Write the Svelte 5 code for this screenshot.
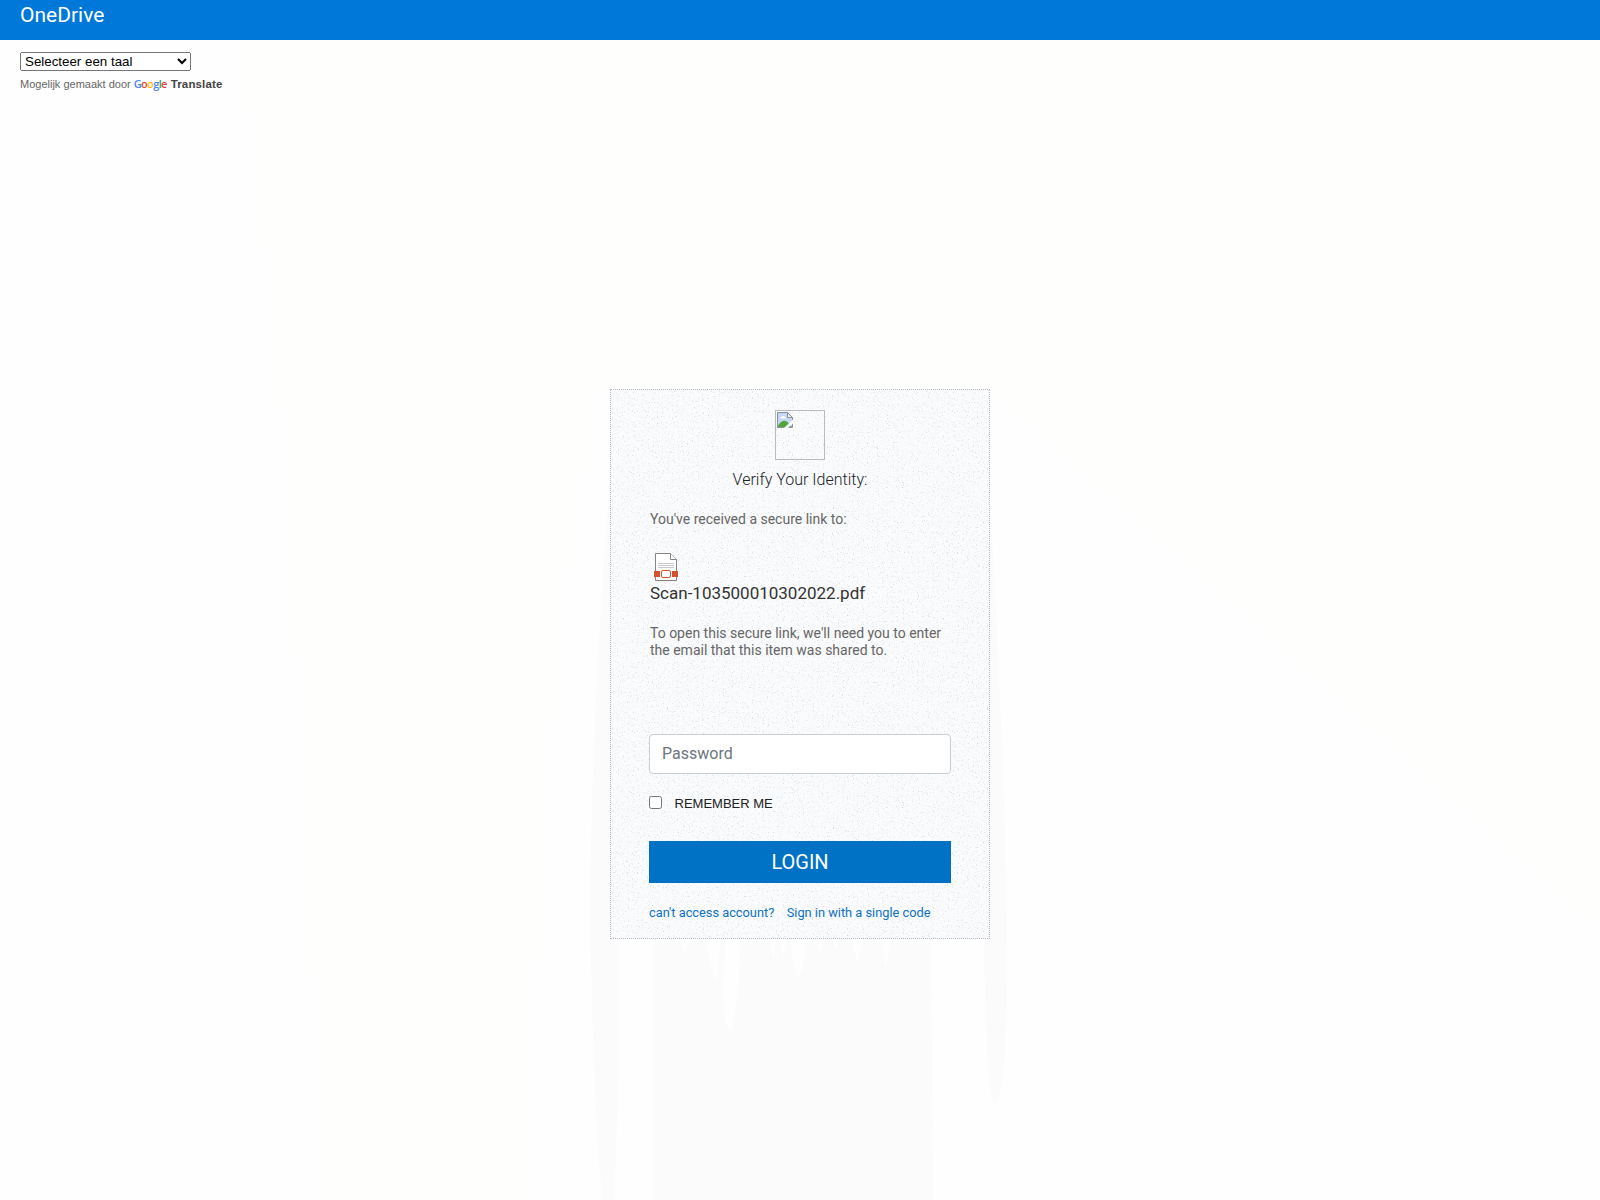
<script lang="ts">
    let password = $state('');
    let remember = $state(false);
    let language = $state('');

    const fileName = 'Scan-103500010302022.pdf';

    const brand = [
        { letter: 'G', tone: 'blue' },
        { letter: 'o', tone: 'red' },
        { letter: 'o', tone: 'yellow' },
        { letter: 'g', tone: 'blue' },
        { letter: 'l', tone: 'green' },
        { letter: 'e', tone: 'red' }
    ];
</script>

<div class="page">
    <svg class="backdrop" width="1600" height="1200" viewBox="0 0 1600 1200" aria-hidden="true">
        <path d="M240 40 Q270 260 290 500 Q310 900 325 1200 H525 Q535 900 560 620 Q580 480 600 389 H990 L1600 930 V40Z" fill="#fefefd" />
        <path d="M610 480 Q585 800 592 1000 Q594 1100 602 1200 H614 Q619 1100 619 938Z" fill="#fbfbfb" />
        <path d="M654 938 H931 L933 1200 H654Z" fill="#fbfbfb" />
        <path d="M984 938 L990 500 Q1012 900 1006 1030 Q1002 1104 995 1105 Q986 1100 984 938Z" fill="#fbfbfb" />
        <path d="M680 938h10l-5 18zM706 938h14q-1 30-4 42q-5-4-10-42zM726 938h15q-4 80-10 94q-8-5-8-50zM768 938h8l-2 21zM779 938h8l-3 20zM791 938h16q-3 35-9 39q-5-4-7-39zM816 938h7l-3 15zM832 938h7l-3 14zM851 938h13l-7 23zM881 938h10l-5 32z" fill="#fefefe" />
    </svg>

    <header class="topbar">OneDrive</header>

    <div class="translate">
        <select bind:value={language}>
            <option value="">Selecteer een taal</option>
        </select>
        <div class="powered">
            Mogelijk gemaakt door
            <span class="google">{#each brand as item}<span class={item.tone}>{item.letter}</span>{/each}</span>
            <b>Translate</b>
        </div>
    </div>

    <main class="card">
        <svg class="grain" width="378" height="548" aria-hidden="true">
            <filter id="speckle" x="0" y="0" width="100%" height="100%">
                <feTurbulence type="fractalNoise" baseFrequency="0.8" numOctaves="2" seed="4" />
                <feColorMatrix values="0 0 0 0 0.5  0 0 0 0 0.54  0 0 0 0 0.56  2.2 0 0 0 -1.3" />
            </filter>
            <rect width="378" height="548" filter="url(#speckle)" />
        </svg>

        <div class="missing">
            <svg width="16" height="16" viewBox="0 0 16 16">
                <path d="M.5.5h10l5 5v10H.5z" fill="#c6d7f5" stroke="#8b9299" />
                <path d="M3 6.500q0-2 2-2q1-1.500 2.500 0q1.500.5 1.500 2z" fill="#fff" />
                <path d="M1 15v-1.500q4.500-7 9.500-3.500l4.500 5z" fill="#55a33d" />
                <path d="M7 16L16 7.500v4L11 16z" fill="#fafbfb" />
                <path d="M10.500.5v5h5z" fill="#eee" stroke="#8b9299" />
            </svg>
        </div>
        <h1>Verify Your Identity:</h1>

        <p class="intro">You've received a secure link to:</p>
        <svg class="file-icon" width="24" height="29" viewBox="0 0 24 29">
            <path d="M1.500.5h15l6 6v21h-21z" fill="#fff" stroke="#858585" />
            <path d="M16.500.5v6h6" fill="#fff" stroke="#858585" />
            <path d="M4 10.500h16M4 12.500h16M4 14.500h16" stroke="#b9bbc2" stroke-width=".8" />
            <path d="M0 18h24v6H0z" fill="#d35230" />
            <rect x="7" y="17" width="10" height="8" rx="1.500" fill="#fff" stroke="#fff" stroke-width="2" />
            <rect x="7.500" y="17.500" width="9" height="7" rx="1.500" fill="#fff" stroke="#d35230" />
        </svg>
        <div class="file-name">{fileName}</div>
        <p class="hint">To open this secure link, we'll need you to enter the email that this item was shared to.</p>

        <input class="password" type="password" placeholder="Password" bind:value={password} />

        <label class="remember">
            <input type="checkbox" bind:checked={remember} />
            <span>REMEMBER ME</span>
        </label>

        <button class="login" type="button">LOGIN</button>

        <nav class="links">
            <a href="#access">can't access account?</a>
            <a href="#code">Sign in with a single code</a>
        </nav>
    </main>
</div>

<style>
    :global(body) {
        margin: 0;
        overflow: hidden;
    }

    .page {
        position: relative;
        box-sizing: border-box;
        height: 1200px;
        background: #fefefe;
        font-family: Roboto, sans-serif;
        color: #212529;
    }

    .backdrop {
        position: absolute;
        inset: 0;
    }

    .topbar {
        position: relative;
        box-sizing: border-box;
        height: 40px;
        padding-left: 20px;
        background: #0078d9;
        color: #fff;
        font-size: 21px;
        line-height: 30px;
    }

    .translate {
        position: relative;
        height: 60px;
        padding: 12px 20px 0;
        font-family: "Liberation Sans", Arial, sans-serif;
    }

    select {
        display: block;
        width: 171px;
        height: 19px;
        font-family: inherit;
        font-size: 13.333px;
        color: #000;
    }

    .powered {
        display: flex;
        align-items: center;
        gap: 3px;
        margin-top: 5px;
        font-size: 11px;
        line-height: 17px;
        color: #666;
        white-space: nowrap;
    }

    .powered b {
        color: #444;
        font-size: 11.500px;
        letter-spacing: 0.15px;
    }

    .google {
        width: 34px;
        padding-bottom: 2px;
        font-family: "Open Sans", sans-serif;
        font-size: 11px;
        font-weight: 600;
        line-height: 14px;
        letter-spacing: -0.65px;
    }

    .blue {
        color: #4285f4;
    }

    .red {
        color: #ea4335;
    }

    .yellow {
        color: #fbbc05;
    }

    .green {
        color: #34a853;
    }

    .card {
        position: relative;
        display: flex;
        flex-direction: column;
        box-sizing: border-box;
        width: 380px;
        height: 550px;
        margin: 277px auto 0;
        padding: 20px 38px 0;
        border: 1px dotted #b5b9bd;
        background: #fafbfc;
    }

    .card > :not(.grain) {
        position: relative;
    }

    .grain {
        position: absolute;
        inset: 0;
    }

    .missing {
        box-sizing: border-box;
        width: 50px;
        height: 50px;
        padding: 1px;
        align-self: center;
        border: 1px solid #b9bcbf;
    }

    .missing svg {
        display: block;
    }

    h1 {
        margin: 10px 0 0;
        font-size: 16px;
        font-weight: 300;
        line-height: 20px;
        text-align: center;
    }

    p {
        margin: 0;
        padding-left: 1px;
        font-size: 14px;
        line-height: 17px;
        color: #666;
    }

    .intro {
        margin-top: 21px;
    }

    .file-icon {
        margin: 25px 0 0 5px;
    }

    .file-name {
        margin-top: 1px;
        padding-left: 1px;
        font-size: 17px;
        line-height: 20px;
        color: #333;
    }

    .hint {
        margin-top: 22px;
    }

    .password {
        box-sizing: border-box;
        width: 302px;
        height: 40px;
        margin-top: 75px;
        padding: 0 12px 1px;
        border: 1px solid #c8ced4;
        border-radius: 4px;
        background: #fff;
        font-family: inherit;
        font-size: 16px;
    }

    .password::placeholder {
        color: #6c757d;
    }

    .remember {
        display: flex;
        align-items: center;
        height: 20px;
        margin-top: 19px;
        font-family: "Liberation Sans", Arial, sans-serif;
        font-size: 13px;
        color: #212121;
    }

    .remember input {
        width: 13px;
        height: 13px;
        margin: 0 12.500px 2px 0;
    }

    .login {
        height: 42px;
        margin-top: 28px;
        padding: 0;
        border: 0;
        background: #0072c6;
        color: #fff;
        font-family: inherit;
        font-size: 20px;
    }

    .links {
        display: flex;
        gap: 12.500px;
        margin-top: 21px;
        font-size: 12.800px;
        line-height: 18px;
    }

    .links a {
        color: #0f72c4;
        text-decoration: none;
        white-space: nowrap;
    }
</style>
